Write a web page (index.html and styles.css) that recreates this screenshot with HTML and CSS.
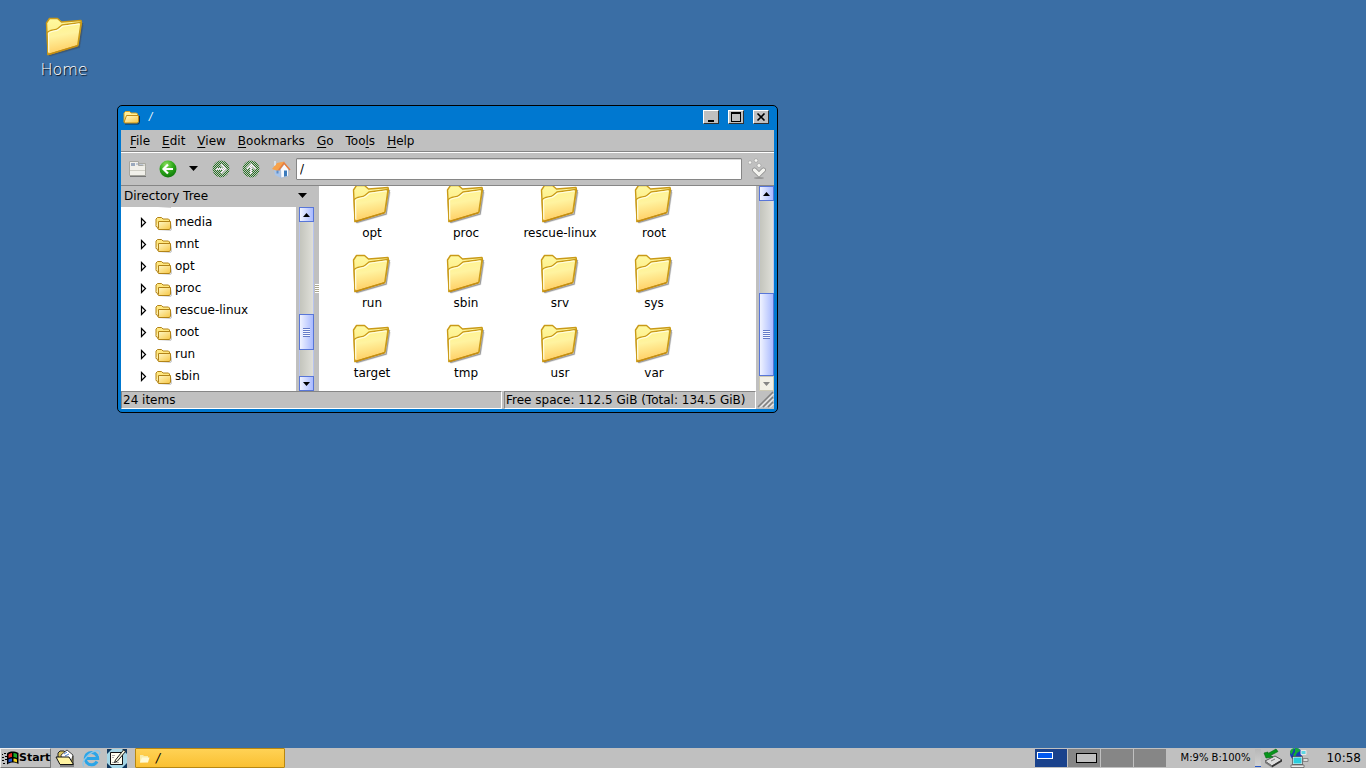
FILE: index.html
```html
<!DOCTYPE html>
<html lang="en">
<head>
<meta charset="utf-8">
<title>Desktop</title>
<link rel="stylesheet" href="styles.css">
</head>
<body>
<svg class="defs" aria-hidden="true">
  <defs>
    <linearGradient id="gold" x1="0" y1="0" x2="0.2" y2="1"><stop offset="0" stop-color="#fff68c"/><stop offset=".45" stop-color="#fff3a0"/><stop offset="1" stop-color="#ffcd62"/></linearGradient>
    <linearGradient id="goldTab" x1="0" y1="0" x2="0" y2="1"><stop offset="0" stop-color="#fff9a0"/><stop offset="1" stop-color="#fbe070"/></linearGradient>
    <linearGradient id="goldSmall" x1="0" y1="0" x2="1" y2="1"><stop offset="0" stop-color="#fffbd0"/><stop offset="1" stop-color="#f6c644"/></linearGradient>
    <radialGradient id="green" cx=".4" cy=".25" r=".8"><stop offset="0" stop-color="#8ee060"/><stop offset=".5" stop-color="#2faa1c"/><stop offset="1" stop-color="#0c7408"/></radialGradient>
    <pattern id="dither" width="2" height="2" patternUnits="userSpaceOnUse"><path d="M0 0h1v1H0zM1 1h1v1H1z" fill="#c0c0c0"/></pattern>
  </defs>
  <symbol id="folder" viewBox="0 0 40 40">
    <path d="M4 38.500 34 30 37.500 6" fill="none" stroke="#444" stroke-width="1.500" opacity=".45"/>
    <path d="M5 39 34.500 30.500 38 8" fill="none" stroke="#444" stroke-width="1.500" opacity=".15"/>
    <path d="M1.500 6 4.500 1.500h8L16.500 5 36 3.500l.5 2L33 28 3 37.500z" fill="url(#goldTab)" stroke="#c99a18" stroke-width="1.400" stroke-linejoin="round"/>
    <path d="M2.200 16c1.300-3.500 8.800-2.500 10.600-4.500L17 8l19-2.500L32.700 28.500 3 37.500z" fill="url(#gold)" stroke="#c99a18" stroke-width="1.300" stroke-linejoin="round"/>
    <path d="M3.800 35.500 3.500 16.500c2-3 8-2 10.200-4l4-3.300 16.800-2.300" fill="none" stroke="#fffde0" stroke-width="1.200"/>
    <path d="M3.500 37.500 32.700 28.800" stroke="#c48d13" stroke-width="1.600"/>
  </symbol>
  <symbol id="folder-small" viewBox="0 0 17 16">
    <path d="M3 15.300h12.500l1-7.500v7l-1 1z" fill="#777" opacity=".7"/>
    <path d="M1 11.500V4l1.500-1.500h4L8 4h5.500l1 1v2.500" fill="#ffe77f" stroke="#b28317" stroke-linejoin="round"/>
    <path d="M3.500 6.500h12v6.500l-1 1.500H3.500L1.300 11" fill="url(#goldSmall)" stroke="#b28317" stroke-linejoin="round"/>
    <path d="M3.500 6.500v7" stroke="#b28317"/>
  </symbol>
  <symbol id="folder-title" viewBox="0 0 17 16">
    <path d="M2 15h13.500l1-1.500V7" fill="none" stroke="#132e50"/>
    <path d="M1 13V4l1.500-1.500h4L8 4h5.500l1 1v2" fill="#fff09a" stroke="#d6a323" stroke-linejoin="round"/>
    <path d="M1 13.500 3.500 6.500h12v6l-1 1.500H2z" fill="url(#goldSmall)" stroke="#c18a12" stroke-linejoin="round"/>
  </symbol>
  <symbol id="up" viewBox="0 0 9 5"><path d="M4.500 0 9 5H0z"/></symbol>
  <symbol id="down" viewBox="0 0 9 5"><path d="M0 0h9L4.500 5z"/></symbol>
  <symbol id="expand" viewBox="0 0 7 11"><path d="M1.500 1.500 5.500 5.500 1.500 9.500z" fill="#fff" stroke="#000" stroke-width="1.200"/></symbol>
</svg>

<main class="desktop">
  <a class="desktop-icon" href="#home"><svg width="40" height="40"><use href="#folder"/></svg><span>Home</span></a>

  <section class="window" aria-label="File manager">
    <header class="titlebar">
      <svg width="17" height="16"><use href="#folder-title"/></svg>
      <h1>/</h1>
      <button aria-label="Minimize"><svg width="12" height="10" viewBox="0 0 12 10"><path d="M3 8h6v2H3z"/></svg></button>
      <button aria-label="Maximize"><svg width="12" height="10" viewBox="0 0 12 10"><path d="M1 0h10v10H1zM2 2v7h8V2z" fill-rule="evenodd"/></svg></button>
      <button aria-label="Close"><svg width="12" height="10" viewBox="0 0 12 10"><path d="m2.500 1.500 7 7m0-7-7 7" stroke="#000" stroke-width="1.600"/></svg></button>
    </header>
    <nav class="menubar">
      <button><u>F</u>ile</button><button><u>E</u>dit</button><button><u>V</u>iew</button><button><u>B</u>ookmarks</button><button><u>G</u>o</button><button>Too<u>l</u>s</button><button><u>H</u>elp</button>
    </nav>
    <div class="toolbar">
      <button aria-label="New tab"><svg width="20" height="20" viewBox="0 0 20 20"><path d="M1.500 2.500h9v4h7v10h-16z" fill="#f1f0ea" stroke="#a6a69f"/><path d="M11 4.500h6.500v3" fill="#deded8" stroke="#a9a9a2"/><path d="M3 4h4v3H3z" fill="#9ba9bd"/><path d="M8 4h2v2H8zM12 5h3v1h-3z" fill="#c0c9d7"/><path d="M2 11.500h15" stroke="#d0cfc6"/><path d="M2 17.500h16" stroke="#777"/></svg></button>
      <button class="back" aria-label="Back"><svg width="20" height="20" viewBox="0 0 20 20"><circle cx="10" cy="10" r="8.500" fill="url(#green)"/><path d="M15 10H6m4-4.500L5.500 10l4.500 4.500" fill="none" stroke="#fff" stroke-width="2.200"/></svg></button>
      <button class="history" aria-label="History"><svg width="9" height="5"><use href="#down"/></svg></button>
      <button class="forward" aria-label="Forward" disabled><svg width="20" height="20" viewBox="0 0 20 20"><circle cx="10" cy="10" r="8.500" fill="#267622"/><path d="M5 10h9m-4-4.500 4.500 4.500-4.500 4.500" fill="none" stroke="#fff" stroke-width="2.200"/><path d="M1 1h18v18H1z" fill="url(#dither)"/></svg></button>
      <button class="parent" aria-label="Up" disabled><svg width="20" height="20" viewBox="0 0 20 20"><circle cx="10" cy="10" r="8.500" fill="#267622"/><path d="M10 15V6M5.500 10 10 5.500l4.500 4.500" fill="none" stroke="#fff" stroke-width="2.200"/><path d="M1 1h18v18H1z" fill="url(#dither)"/></svg></button>
      <button class="parent" aria-label="Home folder"><svg width="20" height="20" viewBox="0 0 20 20"><path d="m3 10 1 6 6 3V10L7 6z" fill="#a9c4e8"/><path d="m9.500 10 4-5 4 5v7l-7.500 2z" fill="#f8f9fc" stroke="#9bb0cf" stroke-width=".6"/><path d="m1 10 5-6 7.500-1.500L8 10l-1.500 2z" fill="#f7a24c"/><path d="M7.500 11.500 13 4l6 7" fill="none" stroke="#ea7c3a" stroke-width="1.400"/><path d="M13 11.500h3v5.500l-3 .7z" fill="#3a7abc"/><path d="M5.500 11.500h2v3h-2z" fill="#5c8fcb"/><path d="M3 2h2v4L3 7z" fill="#d9e0e8"/></svg></button>
      <input type="text" aria-label="Location" value="/">
      <button class="go" aria-label="Go"><svg width="20" height="22" viewBox="0 0 20 22"><ellipse cx="11" cy="20" rx="5" ry="1" fill="#999"/><path d="m6.500 12 4.500 4.500 4.500-4.500" fill="none" stroke="#888" stroke-width="4.600" stroke-linecap="round"/><path d="m6.500 12 4.500 4.500 4.500-4.500" fill="none" stroke="#f3f3ef" stroke-width="3.200" stroke-linecap="round"/><g fill="#f7f7f4" stroke="#999" stroke-width=".6"><circle cx="2" cy="4.500" r="1.700"/><circle cx="8" cy="2.500" r="1.800"/><circle cx="11" cy="7.500" r="2"/></g></svg></button>
    </div>

    <div class="panes">
      <aside class="side">
        <button class="side-title">Directory Tree<svg width="9" height="5"><use href="#down"/></svg></button>
        <div class="side-body">
          <ul class="tree">
            <li><svg width="17" height="16"><use href="#folder-small"/></svg></li>
            <li><svg width="7" height="11"><use href="#expand"/></svg><svg width="17" height="16"><use href="#folder-small"/></svg>media</li>
            <li><svg width="7" height="11"><use href="#expand"/></svg><svg width="17" height="16"><use href="#folder-small"/></svg>mnt</li>
            <li><svg width="7" height="11"><use href="#expand"/></svg><svg width="17" height="16"><use href="#folder-small"/></svg>opt</li>
            <li><svg width="7" height="11"><use href="#expand"/></svg><svg width="17" height="16"><use href="#folder-small"/></svg>proc</li>
            <li><svg width="7" height="11"><use href="#expand"/></svg><svg width="17" height="16"><use href="#folder-small"/></svg>rescue-linux</li>
            <li><svg width="7" height="11"><use href="#expand"/></svg><svg width="17" height="16"><use href="#folder-small"/></svg>root</li>
            <li><svg width="7" height="11"><use href="#expand"/></svg><svg width="17" height="16"><use href="#folder-small"/></svg>run</li>
            <li><svg width="7" height="11"><use href="#expand"/></svg><svg width="17" height="16"><use href="#folder-small"/></svg>sbin</li>
          </ul>
          <div class="scrollbar">
            <button aria-label="Scroll up"><svg width="7" height="4" viewBox="0 0 9 5"><use href="#up"/></svg></button>
            <div class="thumb tree-thumb"><i></i></div>
            <button aria-label="Scroll down"><svg width="7" height="4" viewBox="0 0 9 5"><use href="#down"/></svg></button>
          </div>
        </div>
      </aside>
      <div class="splitter"><i></i></div>
      <div class="files">
        <div class="grid">
          <a href="#opt"><svg width="40" height="40"><use href="#folder"/></svg>opt</a>
          <a href="#proc"><svg width="40" height="40"><use href="#folder"/></svg>proc</a>
          <a href="#rescue-linux"><svg width="40" height="40"><use href="#folder"/></svg>rescue-linux</a>
          <a href="#root"><svg width="40" height="40"><use href="#folder"/></svg>root</a>
          <a href="#run"><svg width="40" height="40"><use href="#folder"/></svg>run</a>
          <a href="#sbin"><svg width="40" height="40"><use href="#folder"/></svg>sbin</a>
          <a href="#srv"><svg width="40" height="40"><use href="#folder"/></svg>srv</a>
          <a href="#sys"><svg width="40" height="40"><use href="#folder"/></svg>sys</a>
          <a href="#target"><svg width="40" height="40"><use href="#folder"/></svg>target</a>
          <a href="#tmp"><svg width="40" height="40"><use href="#folder"/></svg>tmp</a>
          <a href="#usr"><svg width="40" height="40"><use href="#folder"/></svg>usr</a>
          <a href="#var"><svg width="40" height="40"><use href="#folder"/></svg>var</a>
        </div>
      </div>
      <div class="scrollbar">
        <button aria-label="Scroll up"><svg width="7" height="4" viewBox="0 0 9 5"><use href="#up"/></svg></button>
        <div class="thumb files-thumb"><i></i></div>
        <button class="end" aria-label="Scroll down" disabled><svg width="7" height="4" viewBox="0 0 9 5"><use href="#down"/></svg></button>
      </div>
    </div>
    <footer class="statusbar">
      <span class="count">24 items</span>
      <span class="space">Free space: 112.5 GiB (Total: 134.5 GiB)</span>
      <svg width="17" height="17" viewBox="0 0 17 17"><path d="M1 16 16 1M6 16 16 6M11 16l5-5" stroke="#808080" stroke-width="1.500"/><path d="M3 16.500 16.500 3M8 16.500 16.500 8M13 16.500l3.500-3.500" stroke="#fff"/></svg>
    </footer>
  </section>
</main>

<footer class="taskbar">
  <button class="start"><svg width="17" height="15" viewBox="0 0 17 15"><path d="M0 3h1v1H0zM2 2h2v1H2zM0 6h2v1H0zM3 5h2v1H3zM0 9h2v1H0zM3 8h2v1H3zM1 12h2v1H1z"/><path d="M5 2.500C8 0 12 0 16.500 2v11C12 11 9 11 5 13.500z"/><path d="M6.500 3.500Q8 2 10 2v4q-2 0-3.500 1z" fill="#e02a20"/><path d="M11.500 2q2 0 3.500 1v4q-2-1-3.500-1z" fill="#18a828"/><path d="M6.500 8.500Q8 7.500 10 7.500v3q-2 0-3.500 1z" fill="#1e58d8"/><path d="M11.500 7.500q2 0 3.500 1v3q-2-1-3.500-1z" fill="#f4d020"/></svg>Start</button>
  <nav class="launchers">
    <button aria-label="File manager"><svg width="20" height="20" viewBox="0 0 20 20"><path d="M3 9V5l2-2h4l2 2h4l3 3v8h-3z" fill="#d8c25c" stroke="#222"/><path d="m6 7 6-5 6 5-2 8H7z" fill="#fff" stroke="#222" stroke-width=".8"/><path d="m9 6 3-2m-2 4 4-2" stroke="#4c80c9"/><path d="M1 9h13l4.500 7.500H5z" fill="#fff3a0" stroke="#111"/><path d="M5 18h14" stroke="#444"/></svg></button>
    <button aria-label="Web browser"><svg width="20" height="20" viewBox="0 0 20 20"><path d="M16 13.500A6.200 6.200 0 1 1 16.700 10.500H6" fill="none" stroke="#2aa5e8" stroke-width="3"/><path d="M3 18.500C-1 14 9 3 17 2.500c3 .5 1.500 3.500.5 5" fill="none" stroke="#8bc6e8" stroke-width="1.300"/></svg></button>
    <button aria-label="Text editor"><svg width="20" height="20" viewBox="0 0 20 20"><path d="M0 1h20v19H0z" fill="#10385f"/><path d="M5 1h10l5 5v9l-5 5H5l-5-5V6z" fill="#a4d6e6"/><path d="M3.500 4.500h12v12h-12z" fill="#fffff0" stroke="#111"/><path d="M5 7.500h3M5 9.500h2M5 14.500h7" stroke="#aaa"/><path d="m8.500 12 8-10 2 1.500-8 9.500-3 1.500z" fill="#f4f5dc" stroke="#222"/></svg></button>
  </nav>
  <button class="task"><svg width="11" height="11" viewBox="0 0 11 11"><path d="M1 9.500V2h3l1 1h4v6z" fill="#f9edaa"/><path d="m1 9.500 2-5h7.500l-1.500 5z" fill="#fffad5"/></svg><em>/</em></button>
  <nav class="pager" aria-label="Workspaces">
    <button class="current" aria-label="Workspace 1"><i></i></button><button aria-label="Workspace 2"><i></i></button><button aria-label="Workspace 3"></button><button aria-label="Workspace 4"></button>
  </nav>
  <span class="meter">M:9% B:100%</span>
  <span class="graph"></span>
  <svg class="device" width="20" height="20" viewBox="0 0 20 20"><path d="m2 13 10-5 7 4-10 6z" fill="#dedede" stroke="#555"/><path d="m2 13 7 4.500v2L2 15z" fill="#777"/><path d="m9 17.500 10-6v2l-10 6z" fill="#333"/><path d="m1 5 2 5 7-1-2.500-1.500L15 3.500 13 1 5 5.500V4z" fill="#07951b" stroke="#036710" stroke-width=".6"/><path d="m8 13 4-2" stroke="#777"/></svg>
  <svg class="network" width="20" height="20" viewBox="0 0 20 20"><circle cx="7" cy="6" r="6" fill="#1738b5"/><path d="M6 0q5 0 5 3L8 5 6 9 4 7l2-3z" fill="#12aa38"/><path d="M1 3q2-3 4-3L4 4 2 7z" fill="#12aa38"/><path d="M12 2.500h5v4h-5z" fill="#5dd5e2" stroke="#e8e8e8"/><path d="M14 10.500h5v3h-5z" fill="#ddd" stroke="#888"/><path d="M4 9h9v7H4z" fill="#29cddd" stroke="#eee"/><path d="M3.500 8.500h10v8h-10z" fill="none" stroke="#333" stroke-width=".6"/><path d="M2 17h13v2.500H2z" fill="#e8e8e8" stroke="#444" stroke-width=".6"/></svg>
  <time>10:58</time>
</footer>
</body>
</html>
```
FILE: styles.css
```css
* { box-sizing: border-box; }
body {
  margin: 0;
  height: 100vh;
  display: flex;
  flex-direction: column;
  overflow: hidden;
  background: #3a6ea5;
  color: #000;
  font: 12px/16px "DejaVu Sans", sans-serif;
}
button {
  margin: 0;
  padding: 0;
  border: 0;
  background: none;
  color: inherit;
  font: inherit;
}
a { color: inherit; text-decoration: none; }
svg { display: block; flex: none; }
.defs { position: absolute; width: 0; height: 0; }
.desktop { position: relative; flex: 1; }

.desktop-icon {
  position: absolute;
  left: 24px;
  top: 17px;
  width: 80px;
  display: flex;
  flex-direction: column;
  align-items: center;
  gap: 3px;
  color: #fff;
  font-size: 16px;
  font-weight: 200;
  line-height: 20px;
  text-shadow: 1px 1px 1px #000;
}
.desktop-icon svg { margin-left: 2px; }

.window {
  position: absolute;
  left: 117px;
  top: 105px;
  width: 661px;
  padding: 0 3px 3px;
  border: 1px solid #000;
  border-radius: 5px;
  background: #0078d0;
}
.titlebar {
  height: 24px;
  display: flex;
  align-items: center;
  gap: 9px;
  padding: 0 5px 2px 2px;
}
.titlebar h1 {
  flex: 1;
  margin: 0;
  color: #fff;
  font-size: 10px;
  font-weight: 400;
  font-style: italic;
  line-height: 22px;
}
.titlebar button {
  width: 16px;
  height: 14px;
  border: 1px solid;
  border-color: #fff #303030 #303030 #fff;
  background: #c0c0c0;
  display: flex;
  align-items: center;
  justify-content: center;
}
.menubar {
  display: flex;
  height: 23px;
  padding: 1px 3px;
  background: #c0c0c0;
  border-bottom: 1px solid #fff;
  box-shadow: inset 0 -1px #868686;
}
.menubar button { padding: 0 6px; }
.menubar u { text-underline-offset: 2px; }
.toolbar {
  height: 33px;
  display: flex;
  align-items: center;
  padding: 0 6px 1px 7px;
  background: #c0c0c0;
  border-bottom: 1px solid #868686;
}
.toolbar .back { margin-left: 10px; }
.toolbar .history { margin-left: 11px; }
.toolbar .forward { margin-left: 13px; }
.toolbar .parent { margin-left: 10px; }
.toolbar input {
  flex: 1;
  min-width: 0;
  height: 22px;
  margin: 0 6px 0 5px;
  padding: 0 3px;
  border: 1px solid #868686;
  border-radius: 1px;
  background: #fff;
  font: inherit;
  box-shadow: inset 0 1px #d8d8d8;
}
.panes { display: flex; height: 205px; background: #c0c0c0; }
.side { width: 193px; display: flex; flex-direction: column; }
.side-title {
  height: 21px;
  display: flex;
  align-items: center;
  justify-content: space-between;
  padding: 0 7px 2px 3px;
}
.side-body { flex: 1; min-height: 0; display: flex; gap: 3px; }
.tree {
  flex: 1;
  margin: 0;
  padding: 0 0 4px;
  list-style: none;
  background: #fff;
  overflow: hidden;
  display: flex;
  flex-direction: column;
  justify-content: flex-end;
}
.tree li {
  flex: none;
  height: 22px;
  display: flex;
  align-items: center;
  padding-left: 19px;
}
.tree li:first-child { padding-left: 34px; }
.tree svg + svg { margin: 1px 3px 0 8px; }
.scrollbar {
  width: 15px;
  display: flex;
  flex-direction: column;
  border: solid #b8c4ee;
  border-width: 0 1px;
  background: linear-gradient(90deg, #c4c5bd, #dfdfd9);
}
.scrollbar button, .thumb {
  margin: 0 -1px;
  border: 1px solid #5876d8;
  background: linear-gradient(90deg, #f0f3ff, #a9baff);
  display: flex;
  align-items: center;
  justify-content: center;
}
.scrollbar button { height: 15px; flex: none; }
.scrollbar .end { border-color: #cdc9b4; background: #f2f0e7; fill: #858585; }
.thumb { margin-top: auto; }
.thumb i {
  width: 7px;
  height: 9px;
  background: repeating-linear-gradient(#647bc8 0 1px, #f5f7ff 1px 2px);
}
.tree-thumb { height: 36px; margin-bottom: 26px; }
.files-thumb { height: 83px; }
.splitter { width: 5px; display: flex; align-items: center; justify-content: center; }
.splitter i {
  width: 4px;
  height: 9px;
  background: repeating-linear-gradient(#fff 0 1px, #aaa68c 1px 2px);
}
.files { flex: 1; margin-right: 3px; background: #fff; overflow: hidden; }
.grid {
  display: grid;
  grid-template-columns: repeat(auto-fill, 94px);
  grid-auto-rows: 70px;
  margin-top: -2px;
  padding: 0 50px 0 6px;
}
.grid a { display: flex; flex-direction: column; align-items: center; gap: 1px; }
.statusbar {
  display: flex;
  gap: 2px;
  height: 18px;
  background: #c0c0c0;
  line-height: 16px;
}
.statusbar span {
  padding: 0 1px;
  border: 1px solid;
  border-color: #868686 #fff #fff #868686;
  white-space: nowrap;
}
.statusbar .count { flex: 1; }
.statusbar .space { min-width: 252px; }
.statusbar svg { margin-left: -1px; }

.taskbar {
  height: 20px;
  flex: none;
  display: flex;
  align-items: center;
  padding-right: 5px;
  background: #c0c0c0;
}
.start {
  width: 51px;
  height: 20px;
  display: flex;
  align-items: center;
  padding-left: 1px;
  border: 1px solid;
  border-color: #eee #777 #777 #eee;
  font-weight: 700;
  font-size: 11px;
}
.launchers { display: flex; gap: 6px; margin-left: 4px; }
.task {
  flex: 0 1 150px;
  height: 20px;
  margin: 0 auto 0 8px;
  display: flex;
  align-items: center;
  gap: 6px;
  padding: 0 3px;
  border: 1px solid #b88710;
  border-radius: 1px;
  background: linear-gradient(#ffd255, #fac032);
}
.pager { display: flex; gap: 1px; }
.pager button {
  width: 32px;
  height: 18px;
  display: flex;
  align-items: flex-start;
  justify-content: center;
  background: #868686;
}
.pager i { width: 21px; height: 10px; margin: 4px 0 0 5px; border: 1px solid #000; background: #c0c0c0; }
.pager .current { background: #1a428c; justify-content: flex-start; }
.pager .current i { width: 16px; height: 7px; margin: 3px 0 0 2px; border-color: #fff; background: #0058f0; }
.meter { margin-left: 15px; font-size: 10px; white-space: nowrap; }
.graph { width: 6px; height: 18px; margin-left: 5px; background: linear-gradient(#b8b8b8, #d0d0d0); border-bottom: 1px solid #2858c8; }
.device { margin-left: 2px; }
.network { margin: 0 17px 0 6px; }
```
